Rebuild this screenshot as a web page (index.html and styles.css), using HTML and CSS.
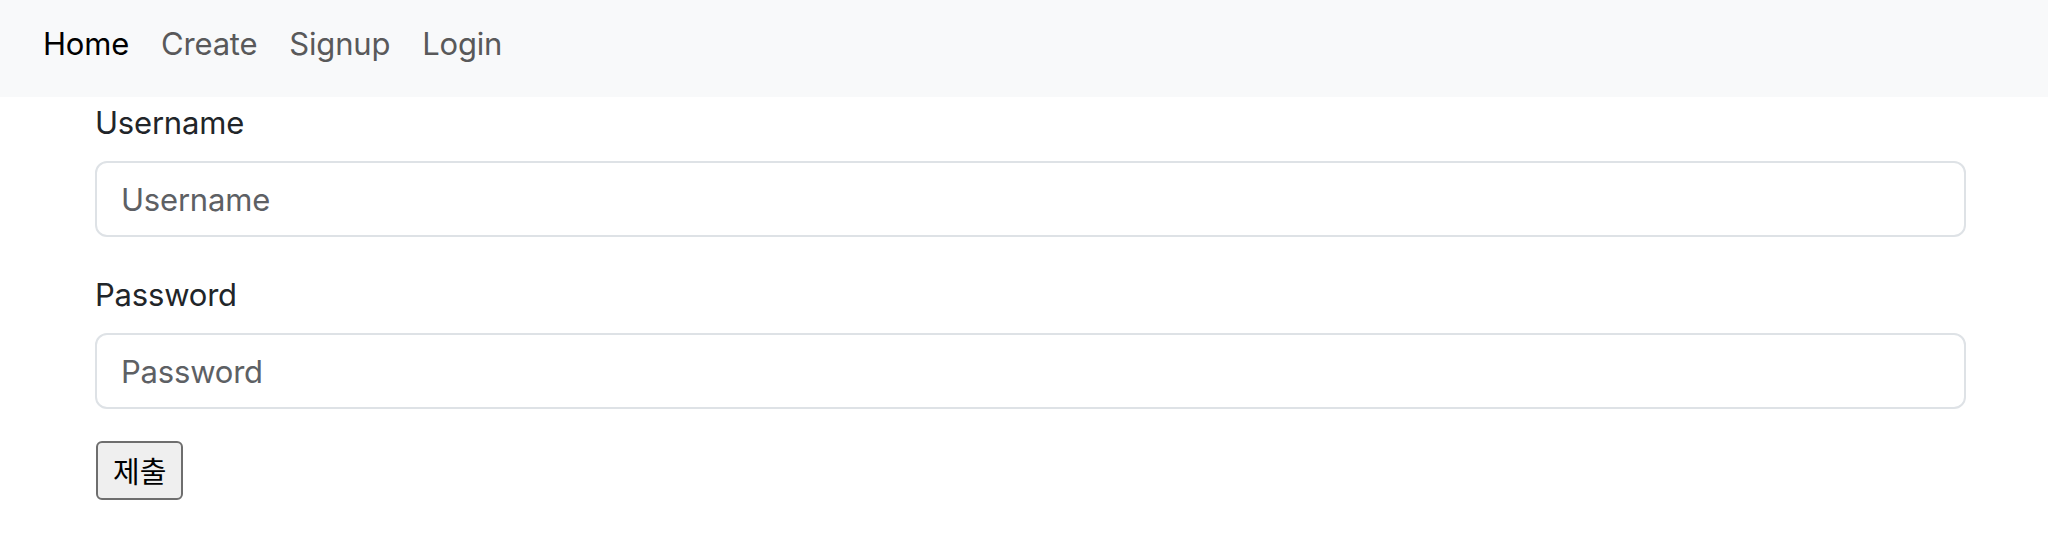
FILE: index.html
```html
<!DOCTYPE html>
<html lang="ko">
<head>
<meta charset="utf-8">
<title>Login</title>
<link rel="stylesheet" href="styles.css">
</head>
<body>
<nav class="navbar">
  <ul class="nav">
    <li><a class="nav-link active" href="#">Home</a></li>
    <li><a class="nav-link" href="#">Create</a></li>
    <li><a class="nav-link" href="#">Signup</a></li>
    <li><a class="nav-link" href="#">Login</a></li>
  </ul>
</nav>
<main class="container">
  <form class="form">
    <div class="field">
      <label class="label" for="username">Username</label>
      <input class="input" id="username" type="text" placeholder="Username">
    </div>
    <div class="field">
      <label class="label" for="password">Password</label>
      <input class="input" id="password" type="password" placeholder="Password">
    </div>
    <button class="submit" type="submit">제출</button>
  </form>
</main>
</body>
</html>
```

FILE: styles.css
```css
* { box-sizing: border-box; }
html, body { margin: 0; padding: 0; }
body {
  font-family: Inter, "Noto Sans", "Noto Sans CJK KR", sans-serif;
  font-size: 31px;
  letter-spacing: -0.2px;
  line-height: 48px;
  color: #212529;
  background: #fff;
}
.navbar {
  background: #f8f9fa;
  height: 97px;
  padding: 20px 24px 0 27px;
}
.nav {
  list-style: none;
  margin: 0;
  padding: 0;
  display: flex;
}
.nav-link {
  display: block;
  padding: 0 16px;
  color: #59595a;
  text-decoration: none;
  line-height: 48px;
}
.nav-link.active { color: #000; }
.container {
  margin-left: 95px;
  width: 1871px;
}
.field { margin-bottom: 32px; }
.label {
  display: block;
  padding-top: 2px;
  margin-bottom: 14px;
  line-height: 48px;
}
.input {
  display: block;
  width: 100%;
  height: 76px;
  padding: 12px 24px;
  font-family: inherit;
  font-size: 31px;
  letter-spacing: -0.2px;
  line-height: 48px;
  color: #212529;
  background: #fff;
  border: 2px solid #dee2e6;
  border-radius: 12px;
  outline: none;
}
.input::placeholder { color: #5d6064; opacity: 1; }
.submit {
  display: block;
  height: 59px;
  padding: 0 15px;
  margin-left: 1px;
  font-family: "Noto Sans CJK KR", sans-serif;
  font-size: 29px;
  letter-spacing: 0;
  line-height: 51px;
  color: #000;
  background: #efefef;
  border: 2px solid #6e6e6e;
  border-radius: 6px;
}
```
